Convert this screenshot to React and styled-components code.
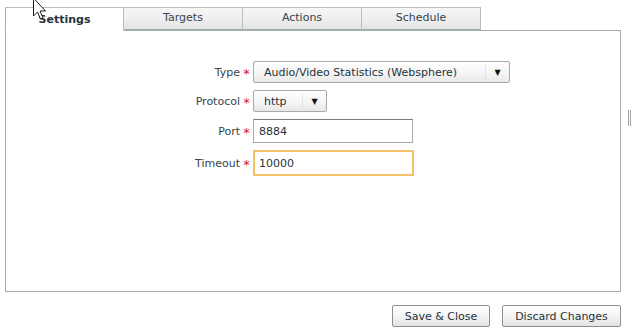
import React from "react";
import styled, { createGlobalStyle } from "styled-components";

const GlobalStyle = createGlobalStyle`
  html, body {
    margin: 0;
    padding: 0;
    background: #ffffff;
  }
  body {
    font-family: "DejaVu Sans", Verdana, sans-serif;
    font-size: 11px;
    color: #2b3a42;
  }
`;

const tabs = ["Settings", "Targets", "Actions", "Schedule"];

const App = () => {
  return (
    <Page>
      <GlobalStyle />
      <TabBar>
        {tabs.map((t, i) => (
          <Tab key={t} active={i === 0}>
            {t}
          </Tab>
        ))}
      </TabBar>
      <Panel>
        <Form>
          <Label>Type</Label>
          <Req>*</Req>
          <Select width={257}>
            <SelectText>Audio/Video Statistics (Websphere)</SelectText>
            <Arrow>▼</Arrow>
          </Select>

          <Label>Protocol</Label>
          <Req>*</Req>
          <Select width={74}>
            <SelectText>http</SelectText>
            <Arrow>▼</Arrow>
          </Select>

          <Label>Port</Label>
          <Req>*</Req>
          <Input width={160} defaultValue="8884" />

          <Label>Timeout</Label>
          <Req>*</Req>
          <Input width={161} focused defaultValue="10000" />
        </Form>
      </Panel>
      <Footer>
        <Button>Save &amp; Close</Button>
        <Button>Discard Changes</Button>
      </Footer>
      <Grip>
        <GripLine />
        <GripLine />
      </Grip>
      <Cursor width="16" height="22" viewBox="0 0 16 22">
        <path
          d="M1.5 -2 L1.5 16 L5.5 12 L8.5 19 L11 18 L8 11 L13.5 11 Z"
          fill="#ffffff"
          stroke="#1a1a1a"
          strokeWidth="1"
          strokeLinejoin="miter"
        />
      </Cursor>
    </Page>
  );
};

const Page = styled.div`
  position: relative;
  width: 633px;
  height: 333px;
  box-sizing: border-box;
  padding: 7px 12px 0 5px;
  overflow: hidden;
`;

const TabBar = styled.div`
  display: flex;
  height: 23px;
  position: relative;
  z-index: 1;
`;

const Tab = styled.div`
  width: 119px;
  box-sizing: border-box;
  display: flex;
  align-items: center;
  justify-content: center;
  border: 1px solid #b8bfbf;
  border-left-width: ${(p) => (p.active ? "1px" : "0")};
  border-bottom: ${(p) => (p.active ? "1px solid #ffffff" : "1px solid #a3adad")};
  height: ${(p) => (p.active ? "24px" : "23px")};
  background: ${(p) =>
    p.active
      ? "#ffffff"
      : "linear-gradient(to bottom, #f6f6f6 0%, #efefef 50%, #e4e4e4 100%)"};
  font-weight: ${(p) => (p.active ? "bold" : "normal")};
  color: ${(p) => (p.active ? "#24333b" : "#34454d")};
  padding-bottom: ${(p) => (p.active ? "0" : "2px")};
  &:first-child {
    border-left: 1px solid #a3adad;
  }
`;

const Panel = styled.div`
  box-sizing: border-box;
  width: 616px;
  height: 262px;
  border: 1px solid #a3adad;
  background: #ffffff;
`;

const Form = styled.div`
  display: grid;
  grid-template-columns: 234px 13px auto;
  grid-template-rows: 22px 22px 24px 26px;
  row-gap: 7px;
  padding-top: 30px;
  align-items: center;
`;

const Label = styled.span`
  text-align: right;
  color: #34454d;
`;

const Req = styled.span`
  color: #d0202a;
  font-size: 13px;
  text-align: center;
  padding-top: 3px;
`;

const Select = styled.div`
  display: flex;
  align-items: stretch;
  width: ${(p) => p.width}px;
  height: 22px;
  box-sizing: border-box;
  border: 1px solid #a9a9a9;
  border-radius: 2px;
  background: linear-gradient(to bottom, #ffffff 0%, #f4f4f4 60%, #e8e8e8 100%);
`;

const SelectText = styled.span`
  flex: 1;
  display: flex;
  align-items: center;
  padding-left: 10px;
  color: #24333b;
`;

const Arrow = styled.span`
  width: 23px;
  display: flex;
  align-items: center;
  justify-content: center;
  font-size: 8px;
  color: #111;
  border-left: 1px solid #e2e2e2;
  margin: 3px 0;
`;

const Input = styled.input`
  width: ${(p) => p.width}px;
  height: ${(p) => (p.focused ? "26px" : "24px")};
  box-sizing: border-box;
  border: ${(p) => (p.focused ? "2px solid #f5c168" : "1px solid #a9a9a9")};
  border-top-color: ${(p) => (p.focused ? "#f5c168" : "#7a7a7a")};
  padding: 0 ${(p) => (p.focused ? "4px" : "5px")};
  font-family: "DejaVu Sans", Verdana, sans-serif;
  font-size: 11px;
  color: #24333b;
  outline: none;
  background: #fff;
`;

const Footer = styled.div`
  display: flex;
  justify-content: flex-end;
  gap: 12px;
  margin-top: 13px;
  width: 616px;
`;

const Button = styled.button`
  height: 22px;
  padding: 0 8px;
  font-family: "DejaVu Sans", Verdana, sans-serif;
  font-size: 11px;
  color: #24333b;
  border: 1px solid #8f8f8f;
  border-radius: 2px;
  background: linear-gradient(to bottom, #ffffff 0%, #f3f3f3 55%, #e3e3e3 100%);
  &:first-child {
    width: 98px;
  }
  &:last-child {
    width: 119px;
  }
`;

const Grip = styled.div`
  position: absolute;
  left: 628px;
  top: 110px;
  display: flex;
  gap: 1px;
`;

const GripLine = styled.div`
  width: 1px;
  height: 16px;
  background: #a0a0a0;
`;

const Cursor = styled.svg`
  position: absolute;
  left: 32px;
  top: 0;
  z-index: 5;
`;

export default App;
